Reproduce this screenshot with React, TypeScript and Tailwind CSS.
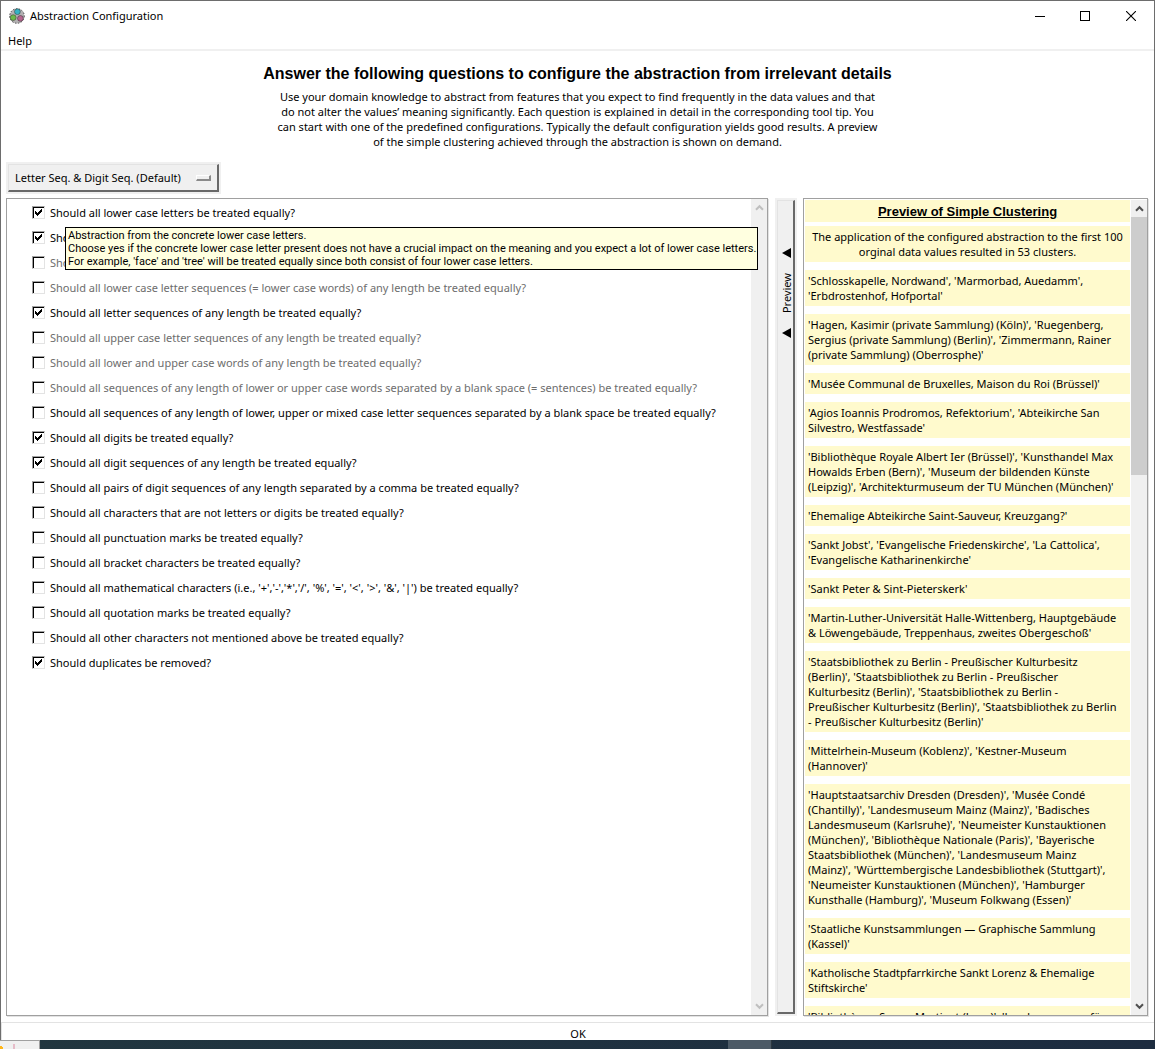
import type { ReactNode } from "react";

type Question = { text: string; checked?: boolean; disabled?: boolean };

const questions: Question[] = [
  { text: "Should all lower case letters be treated equally?", checked: true },
  { text: "Should all upper case letters be treated equally?", checked: true },
  { text: "Should all letters be treated equally?", disabled: true },
  { text: "Should all lower case letter sequences (= lower case words) of any length be treated equally?", disabled: true },
  { text: "Should all letter sequences of any length be treated equally?", checked: true },
  { text: "Should all upper case letter sequences of any length be treated equally?", disabled: true },
  { text: "Should all lower and upper case words of any length be treated equally?", disabled: true },
  { text: "Should all sequences of any length of lower or upper case words separated by a blank space (= sentences) be treated equally?", disabled: true },
  { text: "Should all sequences of any length of lower, upper or mixed case letter sequences separated by a blank space be treated equally?" },
  { text: "Should all digits be treated equally?", checked: true },
  { text: "Should all digit sequences of any length be treated equally?", checked: true },
  { text: "Should all pairs of digit sequences of any length separated by a comma be treated equally?" },
  { text: "Should all characters that are not letters or digits be treated equally?" },
  { text: "Should all punctuation marks be treated equally?" },
  { text: "Should all bracket characters be treated equally?" },
  { text: "Should all mathematical characters (i.e., '+','-','*','/', '%', '=', '<', '>', '&', '|') be treated equally?" },
  { text: "Should all quotation marks be treated equally?" },
  { text: "Should all other characters not mentioned above be treated equally?" },
  { text: "Should duplicates be removed?", checked: true },
];

const clusters: string[] = [
  "'Schlosskapelle, Nordwand', 'Marmorbad, Auedamm',\n'Erbdrostenhof, Hofportal'",
  "'Hagen, Kasimir (private Sammlung) (Köln)', 'Ruegenberg,\nSergius (private Sammlung) (Berlin)', 'Zimmermann, Rainer\n(private Sammlung) (Oberrosphe)'",
  "'Musée Communal de Bruxelles, Maison du Roi (Brüssel)'",
  "'Agios Ioannis Prodromos, Refektorium', 'Abteikirche San\nSilvestro, Westfassade'",
  "'Bibliothèque Royale Albert Ier (Brüssel)', 'Kunsthandel Max\nHowalds Erben (Bern)', 'Museum der bildenden Künste\n(Leipzig)', 'Architekturmuseum der TU München (München)'",
  "'Ehemalige Abteikirche Saint-Sauveur, Kreuzgang?'",
  "'Sankt Jobst', 'Evangelische Friedenskirche', 'La Cattolica',\n'Evangelische Katharinenkirche'",
  "'Sankt Peter & Sint-Pieterskerk'",
  "'Martin-Luther-Universität Halle-Wittenberg, Hauptgebäude\n& Löwengebäude, Treppenhaus, zweites Obergeschoß'",
  "'Staatsbibliothek zu Berlin - Preußischer Kulturbesitz\n(Berlin)', 'Staatsbibliothek zu Berlin - Preußischer\nKulturbesitz (Berlin)', 'Staatsbibliothek zu Berlin -\nPreußischer Kulturbesitz (Berlin)', 'Staatsbibliothek zu Berlin\n- Preußischer Kulturbesitz (Berlin)'",
  "'Mittelrhein-Museum (Koblenz)', 'Kestner-Museum\n(Hannover)'",
  "'Hauptstaatsarchiv Dresden (Dresden)', 'Musée Condé\n(Chantilly)', 'Landesmuseum Mainz (Mainz)', 'Badisches\nLandesmuseum (Karlsruhe)', 'Neumeister Kunstauktionen\n(München)', 'Bibliothèque Nationale (Paris)', 'Bayerische\nStaatsbibliothek (München)', 'Landesmuseum Mainz\n(Mainz)', 'Württembergische Landesbibliothek (Stuttgart)',\n'Neumeister Kunstauktionen (München)', 'Hamburger\nKunsthalle (Hamburg)', 'Museum Folkwang (Essen)'",
  "'Staatliche Kunstsammlungen — Graphische Sammlung\n(Kassel)'",
  "'Katholische Stadtpfarrkirche Sankt Lorenz & Ehemalige\nStiftskirche'",
  "'Bibliothèque Sœurs Martinet (Lyon)', 'Landesmuseum für\nKunst und Kulturgeschichte (Münster)'",
];

function Chevron({ down, muted }: { down?: boolean; muted?: boolean }) {
  return (
    <svg width="9" height="7" viewBox="0 0 9 7" className={muted ? "text-[#bfbfbf]" : "text-[#505050]"} aria-hidden="true">
      <path d={down ? "M1 1.2 4.5 4.8 8 1.2" : "M1 5.8 4.5 2.2 8 5.8"} fill="none" stroke="currentColor" strokeWidth="2" />
    </svg>
  );
}

function ScrollBar({ muted, label, children }: { muted?: boolean; label: string; children?: ReactNode }) {
  return (
    <div className="flex w-4 shrink-0 flex-col bg-[#f0f0f0]">
      <button type="button" aria-label={`${label} up`} disabled={muted} className="flex h-[17px] shrink-0 items-center justify-center">
        <Chevron muted={muted} />
      </button>
      <div className="min-h-0 flex-1">{children}</div>
      <button type="button" aria-label={`${label} down`} disabled={muted} className="flex h-[17px] shrink-0 items-center justify-center">
        <Chevron down muted={muted} />
      </button>
    </div>
  );
}

function CheckRow({ question }: { question: Question }) {
  return (
    <label className={`flex h-[25px] items-center gap-[5px] whitespace-nowrap ${question.disabled ? "text-[#6d6d6d]" : "text-black"}`}>
      <span className="grid size-[13px] shrink-0">
        <input
          type="checkbox"
          defaultChecked={question.checked}
          disabled={question.disabled}
          className="peer col-start-1 row-start-1 size-[13px] appearance-none border border-t-[#a0a0a0] border-r-[#e3e3e3] border-b-[#e3e3e3] border-l-[#a0a0a0] bg-white shadow-[inset_1px_1px_0_#000]"
        />
        <svg viewBox="0 0 13 13" className="pointer-events-none invisible col-start-1 row-start-1 size-[13px] peer-checked:visible" shapeRendering="crispEdges" aria-hidden="true">
          <path d="M3 5h1v3h-1zM4 6h1v3h-1zM5 7h1v3h-1zM6 6h1v3h-1zM7 5h1v3h-1zM8 4h1v3h-1zM9 3h1v3h-1z" fill="#000" />
        </svg>
      </span>
      <span>{question.text}</span>
    </label>
  );
}

function AppLogo() {
  return (
    <svg width="16" height="16" viewBox="0 0 16 16" aria-hidden="true">
      <circle cx="8" cy="8" r="7.3" fill="#b4b1b3" stroke="#444" strokeWidth="1" strokeDasharray="1.5 1.5" />
      <circle cx="8.4" cy="3.7" r="2.9" fill="#35b3c4" stroke="#333" strokeWidth=".5" />
      <circle cx="4.2" cy="9.6" r="2.9" fill="#6dba49" stroke="#333" strokeWidth=".5" />
      <circle cx="11.4" cy="10.4" r="2.9" fill="#b5658f" stroke="#333" strokeWidth=".5" />
    </svg>
  );
}

function LeftArrow() {
  return (
    <svg width="9" height="10" viewBox="0 0 9 10" className="shrink-0" aria-hidden="true">
      <path d="M9 0v10L0 5z" fill="#000" />
    </svg>
  );
}

export default function App() {
  return (
    <div className="flex h-screen flex-col overflow-hidden bg-white font-['Noto_Sans','Open_Sans',sans-serif] text-[11px] leading-[15px] text-black">
      <div className="flex min-h-0 flex-1 flex-col border-x border-t border-[#6d6d6d]">
        <header className="flex h-[29px] shrink-0 items-center pl-2">
          <AppLogo />
          <h1 className="ml-[5px] flex-1">Abstraction Configuration</h1>
          <div className="flex h-full">
            <button type="button" aria-label="Minimize" className="grid w-11 place-items-center">
              <svg width="10" height="10" aria-hidden="true"><path d="M0 5.5h10" stroke="#000" /></svg>
            </button>
            <button type="button" aria-label="Maximize" className="grid w-[46px] place-items-center">
              <svg width="10" height="10" aria-hidden="true"><rect x=".5" y=".5" width="9" height="9" fill="none" stroke="#000" /></svg>
            </button>
            <button type="button" aria-label="Close" className="grid w-[46px] place-items-center">
              <svg width="10" height="10" aria-hidden="true"><path d="M0 0l10 10M10 0L0 10" stroke="#000" strokeWidth="1.1" /></svg>
            </button>
          </div>
        </header>
        <nav className="flex h-[21px] shrink-0 items-center border-b-2 border-[#f0f0f0] pt-[1px] pl-[7px]">
          <button type="button">Help</button>
        </nav>

        <section className="shrink-0 pt-[13px] text-center">
          <h2 className="font-['Liberation_Sans',Arial,sans-serif] text-base leading-5 font-bold">
            Answer the following questions to configure the abstraction from irrelevant details
          </h2>
          <p className="mt-[5px] whitespace-pre-line">
            {"Use your domain knowledge to abstract from features that you expect to find frequently in the data values and that\ndo not alter the values’ meaning significantly. Each question is explained in detail in the corresponding tool tip. You\ncan start with one of the predefined configurations. Typically the default configuration yields good results. A preview\nof the simple clustering achieved through the abstraction is shown on demand."}
          </p>
        </section>

        <div className="mt-[13px] ml-[5px] flex shrink-0">
          <div className="border-2 border-[#f0f0f0]">
            <button type="button" aria-haspopup="listbox" className="flex h-7 w-[211px] items-center justify-between border-t border-r-2 border-b-2 border-l border-t-[#e3e3e3] border-r-[#696969] border-b-[#696969] border-l-[#e3e3e3] bg-[#f0f0f0] px-[6px]">
              Letter Seq. &amp; Digit Seq. (Default)
              <span className="h-[6px] w-[15px] border-t border-r-2 border-b-2 border-l border-t-white border-r-[#8a8a8a] border-b-[#8a8a8a] border-l-white bg-[#f0f0f0]" />
            </button>
          </div>
        </div>

        <main className="mt-1 flex min-h-0 flex-1 px-[5px] pb-[6px]">
          <section className="relative flex min-w-0 flex-1 border border-[#a0a0a0] shadow-[1px_1px_0_#e3e3e3]">
            <div className="min-w-0 flex-1 pt-[1px] pl-[25px]">
              {questions.map((q) => <CheckRow key={q.text} question={q} />)}
            </div>
            <ScrollBar muted label="Scroll questions" />
            <div role="tooltip" className="absolute top-[28px] left-[58px] z-10 border border-black bg-[#ffffe0] py-[1px] pr-px pl-[2px] font-[Roboto,sans-serif] leading-[13px] whitespace-pre">
              {"Abstraction from the concrete lower case letters.\nChoose yes if the concrete lower case letter present does not have a crucial impact on the meaning and you expect a lot of lower case letters.\nFor example, 'face' and 'tree' will be treated equally since both consist of four lower case letters."}
            </div>
          </section>

          <button type="button" className="mr-[6px] ml-[7px] flex w-[22px] shrink-0 flex-col items-center border-2 border-[#f0f0f0] bg-[#f0f0f0]">
            <span className="flex w-full flex-1 flex-col items-center gap-[15px] border-t border-r-2 border-b-2 border-l border-t-[#e3e3e3] border-r-[#696969] border-b-[#696969] border-l-[#e3e3e3] pt-[47px] pl-[2px]">
              <LeftArrow />
              <span className="rotate-180 [writing-mode:vertical-rl]">Preview</span>
              <LeftArrow />
            </span>
          </button>

          <section className="mr-px flex w-[345px] shrink-0 border border-[#a0a0a0] pt-px pl-px shadow-[1px_1px_0_#e3e3e3]">
            <div className="min-w-0 flex-1 overflow-hidden pr-px">
              <h3 className="h-[22px] bg-[#fffacd] text-center font-['Liberation_Sans',Arial,sans-serif] text-[13px] leading-[23px] font-bold underline">Preview of Simple Clustering</h3>
              <p className="mt-1 bg-[#fffacd] py-[3px] text-center whitespace-pre">
                {"The application of the configured abstraction to the first 100\norginal data values resulted in 53 clusters."}
              </p>
              <ul className="mt-2 flex flex-col gap-2">
                {clusters.map((c) => <li key={c} className="bg-[#fffacd] p-[3px] whitespace-pre">{c}</li>)}
              </ul>
            </div>
            <ScrollBar label="Scroll preview">
              <div className="h-[33%] bg-[#cdcdcd]" />
            </ScrollBar>
          </section>
        </main>

        <button type="button" className="h-[18px] shrink-0 border-t border-l border-[#e3e3e3] pt-[5px] leading-3">OK</button>
      </div>
      <footer className="flex h-[9px] shrink-0 bg-linear-to-r from-[#21363f] to-[#1d2c40]">
        <div className="w-10 border-t border-r border-[#a0a0a0] bg-[#f0f0f0]">
          <svg width="20" height="8" aria-hidden="true">
            <path d="M0 5h2v1h1v2H0z" fill="#ffb61a" />
            <path d="M13 3h2v5h-2z" fill="#e6bcc8" />
          </svg>
        </div>
        <div className="w-[59.6%]" />
        <div className="w-11 border-r border-[#2b3740] bg-[#4c5a66]" />
      </footer>
    </div>
  );
}
